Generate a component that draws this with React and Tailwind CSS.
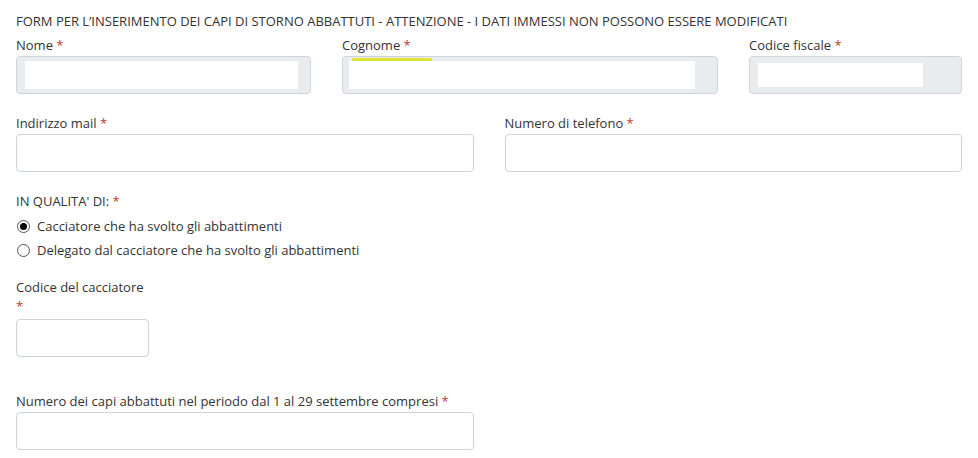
import React from 'react';

const font = { fontFamily: '"Open Sans", "Noto Sans", sans-serif' };

function Req() {
  return <span className="text-[#c0392b]"> *</span>;
}

function Label({ children, req = true, className = 'mb-[2px]' }) {
  return (
    <label className={`block text-[13px] leading-[18px] text-[#333] ${className}`}>
      {children}
      {req && <Req />}
    </label>
  );
}

// Disabled field with a blanked-out (redacted) value inside
function LockedField({ fillClass, marker }) {
  return (
    <div className="relative h-[38px] rounded-[4px] border border-[#ced4da] bg-[#e9ecef]">
      <div className={`absolute bg-white ${fillClass}`} />
      {marker && <div className="absolute left-[9px] top-[1px] h-[3px] w-[80px] rounded-full bg-[#e2e232]" />}
    </div>
  );
}

function Field({ className = '' }) {
  return <div className={`h-[38px] rounded-[4px] border border-[#ced4da] bg-white ${className}`} />;
}

function Radio({ checked, children }) {
  return (
    <label className="flex items-center gap-[7px] text-[13px] leading-[24px] text-[#333]">
      <span className="flex h-[13px] w-[13px] items-center justify-center rounded-full border border-[#555] bg-white ml-[1px]">
        {checked && <span className="h-[7px] w-[7px] rounded-full bg-black" />}
      </span>
      {children}
    </label>
  );
}

export default function App() {
  return (
    <div className="min-h-[458px] bg-white px-[16px] pt-[12px]" style={font}>
      <div className="w-[946px]">
        <p className="text-[13px] leading-[18px] text-[#333] mb-[6px]">
          FORM PER L’INSERIMENTO DEI CAPI DI STORNO ABBATTUTI - ATTENZIONE - I DATI IMMESSI NON POSSONO ESSERE MODIFICATI
        </p>

        <div className="grid grid-cols-[295px_376px_213px] gap-x-[31px]">
          <div>
            <Label>Nome</Label>
            <LockedField fillClass="left-[8px] right-[12px] top-[4px] bottom-[4px]" />
          </div>
          <div>
            <Label>Cognome</Label>
            <LockedField fillClass="left-[6px] right-[22px] top-[4px] bottom-[4px]" marker />
          </div>
          <div>
            <Label>Codice fiscale</Label>
            <LockedField fillClass="left-[8px] right-[38px] top-[6px] bottom-[6px]" />
          </div>
        </div>

        <div className="mt-[20px] grid grid-cols-2 gap-x-[31px]">
          <div>
            <Label>Indirizzo mail</Label>
            <Field />
          </div>
          <div>
            <Label>Numero di telefono</Label>
            <Field />
          </div>
        </div>

        <div className="mt-[20px]">
          <Label className="mb-[4px]">IN QUALITA' DI:</Label>
          <Radio checked>Cacciatore che ha svolto gli abbattimenti</Radio>
          <Radio>Delegato dal cacciatore che ha svolto gli abbattimenti</Radio>
        </div>

        <div className="mt-[16px]">
          <p className="text-[13px] leading-[18px] text-[#333]">Codice del cacciatore</p>
          <p className="text-[13px] leading-[18px] text-[#c0392b] mb-[4px] pt-[1px]">*</p>
          <Field className="w-[133px]" />
        </div>

        <div className="mt-[35px] w-[458px]">
          <Label>Numero dei capi abbattuti nel periodo dal 1 al 29 settembre compresi</Label>
          <Field />
        </div>
      </div>
    </div>
  );
}
